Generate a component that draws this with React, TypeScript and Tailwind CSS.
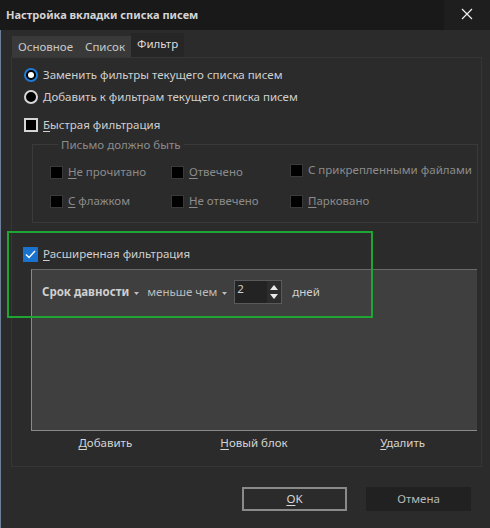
import React from "react";

const font = "font-['Noto_Sans','Open_Sans',sans-serif]";

function Radio({ checked, label }: { checked?: boolean; label: string }) {
  return (
    <div className="flex items-center h-[22px] gap-[5px]">
      {checked ? (
        <span className="w-[14px] h-[14px] rounded-full border-2 border-[#1f7ad8] bg-black flex items-center justify-center">
          <span className="w-[6px] h-[6px] rounded-full bg-white" />
        </span>
      ) : (
        <span className="w-[14px] h-[14px] rounded-full border-2 border-[#d6d6d6] bg-black" />
      )}
      <span className="text-[#cfcfcf]">{label}</span>
    </div>
  );
}

function DisabledCheck({ u, rest }: { u: string; rest: string }) {
  return (
    <div className="flex items-center h-[22px] gap-[5px] whitespace-nowrap">
      <span className="w-[13px] h-[13px] shrink-0 bg-black border border-[#3a3a3a]" />
      <span className="text-[#8c8c8c]">
        <u className="underline-offset-2">{u}</u>
        {rest}
      </span>
    </div>
  );
}

function Caret() {
  return (
    <svg width="5" height="3" viewBox="0 0 5 3" className="ml-[5px] mt-[2px]">
      <path d="M0 0 H5 L2.5 3 Z" fill="#bdbdbd" />
    </svg>
  );
}

export default function App() {
  return (
    <div className={`${font} w-[490px] h-[528px] bg-[#2b2b2b] flex flex-col text-[11.5px] relative`}>
      {/* Title bar */}
      <div className="h-[30px] flex bg-[#191919]">
        <div className="flex-1 flex items-center pl-[6px] font-bold text-[11px] text-[#d4d4d4]">
          Настройка вкладки списка писем
        </div>
        <div className="w-[46px] bg-[#1e1e1e] flex items-center justify-center pb-[2px]">
          <svg width="12" height="12" viewBox="0 0 12 12">
            <path d="M1 1 L11 11 M11 1 L1 11" stroke="#f0f0f0" strokeWidth="1.2" />
          </svg>
        </div>
      </div>

      {/* Body */}
      <div className="flex-1 flex flex-col border-l border-[#6d7f99] pl-[10px] pr-[8px] pt-[4px]">
        {/* Tabs */}
        <div className="flex items-end h-[23px] pl-[1px]">
          <div className="h-[21px] flex items-center bg-[#393939] px-[6px] text-[#c8c8c8]">Основное</div>
          <div className="h-[21px] flex items-center bg-[#393939] px-[6px] text-[#c8c8c8]">Список</div>
          <div className="h-[24px] flex items-center bg-[#262626] px-[6px] pb-[3px] text-[#dcdcdc]">Фильтр</div>
        </div>

        {/* Tab panel */}
        <div className="w-[471px] h-[410px] border border-[#363636] flex flex-col pt-[6px]">
          <div className="pl-[12px] flex flex-col">
            <Radio checked label="Заменить фильтры текущего списка писем" />
            <Radio label="Добавить к фильтрам текущего списка писем" />

            <div className="flex items-center h-[22px] gap-[5px] mt-[6px]">
              <span className="w-[14px] h-[14px] border-2 border-[#d6d6d6] bg-black" />
              <span className="text-[#cfcfcf]">
                <u className="underline-offset-2">Б</u>ыстрая фильтрация
              </span>
            </div>
          </div>

          <fieldset className="ml-[20px] w-[446px] border border-[#3a3a3a] pl-[17px] pb-[10px]">
            <legend className="ml-[8px] px-[3px] text-[#8c8c8c] leading-[17px]">Письмо должно быть</legend>
            <div className="grid grid-cols-[121px_119px_1fr] gap-y-[7px] mt-[8px]">
              <DisabledCheck u="Н" rest="е прочитано" />
              <DisabledCheck u="О" rest="твечено" />
              <div className="flex items-center h-[22px] gap-[5px] -mt-[2px] whitespace-nowrap">
                <span className="w-[13px] h-[13px] shrink-0 bg-black border border-[#3a3a3a]" />
                <span className="text-[#8c8c8c]">С прикрепленными файлами</span>
              </div>
              <DisabledCheck u="С" rest=" флажком" />
              <DisabledCheck u="Н" rest="е отвечено" />
              <DisabledCheck u="П" rest="арковано" />
            </div>
          </fieldset>

          <div className="pl-[11px] mt-[20px] flex items-center h-[22px] gap-[5px]">
            <span className="w-[15px] h-[15px] bg-[#1a72cf] flex items-center justify-center">
              <svg width="11" height="9" viewBox="0 0 11 9">
                <path d="M1 4.5 L4 7.5 L10 1" stroke="#fff" strokeWidth="1.4" fill="none" />
              </svg>
            </span>
            <span className="text-[#cfcfcf]">
              <u className="underline-offset-2">Р</u>асширенная фильтрация
            </span>
          </div>

          {/* Advanced filter area */}
          <div className="ml-[19px] mt-[4px] w-[446px] h-[162px] bg-[#3f3f3f] border-l border-b border-t border-l-[#8a8a8a] border-b-[#8a8a8a] border-t-[#6a6a6a] pl-[10px] pt-[10px]">
            <div className="flex items-center h-[24px]">
              <span className="font-bold text-[#cfcfcf]">Срок давности</span>
              <Caret />
              <span className="ml-[8px] text-[#bdbdbd]">меньше чем</span>
              <Caret />
              <div className="ml-[7px] w-[48px] h-[24px] bg-[#232323] border border-[#5a5a5a] flex">
                <span className="flex-1 pl-[2px] leading-[16px] text-[#cfcfcf]">2</span>
                <div className="w-[14px] bg-[#2c2c2c] flex flex-col items-center justify-center gap-[4px]">
                  <svg width="8" height="5" viewBox="0 0 8 5">
                    <path d="M0 5 L4 0 L8 5 Z" fill="#e8e8e8" />
                  </svg>
                  <svg width="8" height="5" viewBox="0 0 8 5">
                    <path d="M0 0 L8 0 L4 5 Z" fill="#e8e8e8" />
                  </svg>
                </div>
              </div>
              <span className="ml-[10px] text-[#cfcfcf]">дней</span>
            </div>
          </div>

          <div className="ml-[19px] w-[446px] grid grid-cols-3 text-center text-[#d4d4d4] mt-[2px] h-[20px] items-center">
            <span><u className="underline-offset-2">Д</u>обавить</span>
            <span><u className="underline-offset-2">Н</u>овый блок</span>
            <span><u className="underline-offset-2">У</u>далить</span>
          </div>
        </div>

        {/* Dialog buttons */}
        <div className="flex justify-end gap-[19px] pr-[11px] mt-[20px]">
          <button className="w-[105px] h-[24px] border-2 border-[#8a8a8a] bg-[#2b2b2b] text-[#d8d8d8]">
            <u className="underline-offset-2">O</u>K
          </button>
          <button className="w-[105px] h-[24px] bg-[#212121] text-[#b8b8b8]">Отмена</button>
        </div>
      </div>

      {/* Highlight annotation */}
      <div className="absolute left-[7px] top-[231px] w-[366px] h-[87px] border-2 border-[#1fa534] pointer-events-none" />
    </div>
  );
}
